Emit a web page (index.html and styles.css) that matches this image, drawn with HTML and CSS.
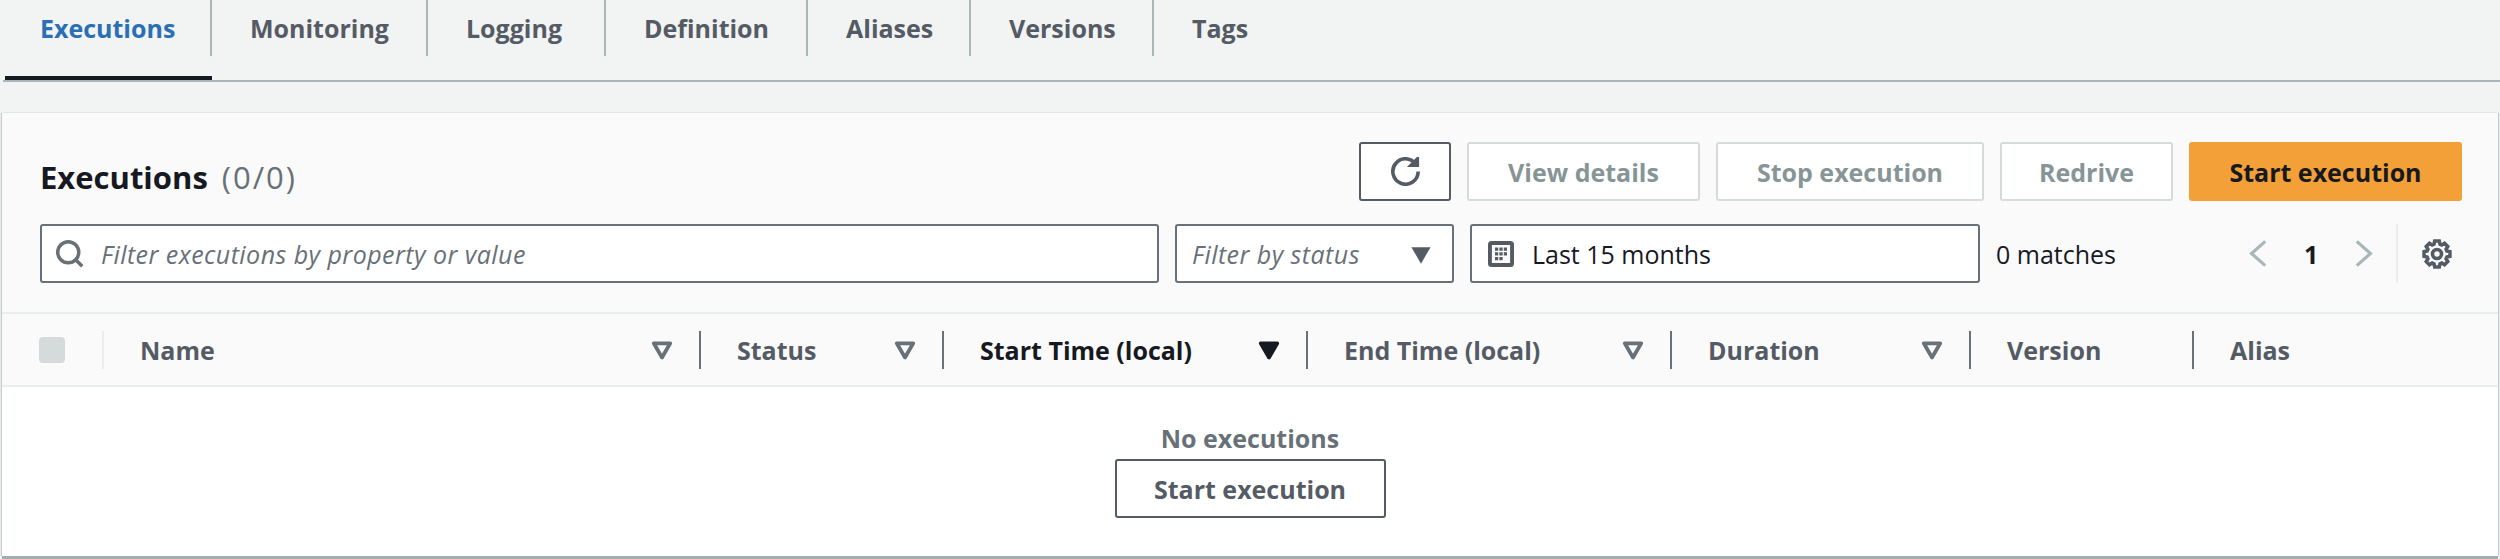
FILE: index.html
```html
<!DOCTYPE html>
<html lang="en">
<head>
    <meta charset="UTF-8">
    <title>Executions</title>
    <link rel="stylesheet" href="styles.css">
</head>
<body>
    <div class="tabs">
        <a class="tab tab-active">Executions</a>
        <a class="tab">Monitoring</a>
        <a class="tab">Logging</a>
        <a class="tab">Definition</a>
        <a class="tab">Aliases</a>
        <a class="tab">Versions</a>
        <a class="tab tab-last">Tags</a>
    </div>

    <div class="panel">
        <div class="panel-header">
            <div class="toolbar">
                <h2 class="title">Executions <span class="count">(0/0)</span></h2>
                <div class="actions">
                    <button class="btn btn-refresh">
                        <svg class="icon-refresh" viewBox="0 0 16 16"><path class="arrow-head" d="M10 5h5V0z"/><path d="M15 8a6.99 6.99 0 1 1-.64-2.94"/></svg>
                    </button>
                    <button class="btn btn-disabled btn-view">View details</button>
                    <button class="btn btn-disabled btn-stop">Stop execution</button>
                    <button class="btn btn-disabled btn-redrive">Redrive</button>
                    <button class="btn btn-primary">Start execution</button>
                </div>
            </div>
            <div class="filters">
                <div class="field field-search">
                    <svg class="icon-search" viewBox="0 0 16 16"><circle cx="7" cy="7" r="6"/><path d="M11.24 11.24 15 15"/></svg>
                    <span class="placeholder">Filter executions by property or value</span>
                </div>
                <div class="field field-status">
                    <span class="placeholder">Filter by status</span>
                    <svg class="caret" viewBox="0 0 16 16"><path d="M1 3h14l-7 12z"/></svg>
                </div>
                <div class="field field-date">
                    <svg class="icon-calendar" viewBox="0 0 16 16">
                        <rect class="cal-frame" x="1.2" y="1.2" width="13.6" height="13.6" rx="1"/>
                        <path d="M4.3 4h2v2h-2zM7 4h2v2H7zM9.700 4h2v2h-2zM4.300 6.900h2v2h-2zM7 6.900h2v2H7zM9.700 6.900h2v2h-2zM4.300 9.800h2v2h-2zM7 9.800h2v2H7z"/>
                    </svg>
                    <span>Last 15 months</span>
                </div>
                <span class="matches">0 matches</span>
                <div class="pager">
                    <svg class="chevron" viewBox="0 0 11 18"><path d="M10 1.500 1.500 9l8.500 7.500"/></svg>
                    <span class="page-num">1</span>
                    <svg class="chevron" viewBox="0 0 11 18"><path d="M1 1.500 9.500 9 1 16.500"/></svg>
                </div>
                <div class="settings">
                    <svg class="icon-gear" viewBox="0 0 16 16">
                        <path d="M9.216 1.106 9.608 2.740 10.582 3.144 12.015 2.266 13.734 3.985 12.856 5.418 13.260 6.392 14.894 6.784V9.216L13.260 9.608 12.856 10.582 13.734 12.015 12.015 13.734 10.582 12.856 9.608 13.260 9.216 14.894H6.784L6.392 13.260 5.418 12.856 3.985 13.734 2.266 12.015 3.144 10.582 2.740 9.608 1.106 9.216V6.784L2.740 6.392 3.144 5.418 2.266 3.985 3.985 2.266 5.418 3.144 6.392 2.740 6.784 1.106z"/>
                        <circle cx="8" cy="8" r="2.4"/>
                    </svg>
                </div>
            </div>
        </div>

        <div class="thead">
            <div class="th th-check"><span class="checkbox"></span></div>
            <div class="th">Name <svg class="sort" viewBox="0 0 16 16"><path d="M2.500 3.500h11L8 13z"/></svg></div>
            <div class="th">Status <svg class="sort" viewBox="0 0 16 16"><path d="M2.500 3.500h11L8 13z"/></svg></div>
            <div class="th th-sorted">Start Time (local) <svg class="sort" viewBox="0 0 16 16"><path d="M2.500 3.500h11L8 13z"/></svg></div>
            <div class="th">End Time (local) <svg class="sort" viewBox="0 0 16 16"><path d="M2.500 3.500h11L8 13z"/></svg></div>
            <div class="th">Duration <svg class="sort" viewBox="0 0 16 16"><path d="M2.500 3.500h11L8 13z"/></svg></div>
            <div class="th">Version</div>
            <div class="th">Alias</div>
        </div>

        <div class="empty">
            <div class="empty-text">No executions</div>
            <button class="btn btn-normal">Start execution</button>
        </div>
    </div>
</body>
</html>
```

FILE: styles.css
```css
* {
    box-sizing: border-box;
}
body {
    margin: 0;
    height: 559px;
    overflow: hidden;
    background: #f2f3f3;
    font-family: "Open Sans", "Noto Sans", sans-serif;
    font-size: 25px;
    color: #16191f;
}
svg {
    display: block;
    flex: none;
}

/* tabs */
.tabs {
    display: grid;
    grid-template-columns: 207px 216px 178px 202px 163px 183px auto;
    height: 82px;
    margin-left: 3px;
    padding-left: 2px;
    border-bottom: 2px solid #aab7b8;
}
.tab {
    height: 80px;
    padding-left: 38px;
    font-weight: 700;
    color: #545b64;
    line-height: 56px;
    position: relative;
}
.tab::after {
    content: "";
    position: absolute;
    top: 0;
    right: 0;
    width: 2px;
    height: 56px;
    background: #aab7b8;
}
.tab-last::after {
    display: none;
}
.tab-active {
    padding-left: 35px;
    color: #2a6fb5;
    border-bottom: 4px solid #16191f;
}

/* panel */
.panel {
    height: 443px;
    margin: 31px 2px 0 2px;
    background: #fff;
    box-shadow: 0 3px 0 #a4adae, -1px 0 1px #c3cbcb, 1px 0 1px #c3cbcb;
}
.panel-header {
    height: 201px;
    padding: 29px 36px 0 38px;
    background: #fafafa;
    border-bottom: 2px solid #eaeded;
}
.toolbar {
    display: flex;
    justify-content: space-between;
    align-items: center;
}
.title {
    margin: 0;
    padding-top: 10px;
    font-size: 31px;
    font-weight: 700;
}
.count {
    margin-left: 6px;
    font-weight: 400;
    letter-spacing: 2px;
    color: #687078;
}
.actions {
    display: flex;
    gap: 16px;
}
.btn {
    height: 59px;
    padding: 0;
    border: 2px solid #545b64;
    border-radius: 3px;
    background: #fff;
    font-family: inherit;
    font-size: 25px;
    font-weight: 700;
}
.btn-refresh {
    display: flex;
    align-items: center;
    justify-content: center;
    width: 92px;
}
.icon-refresh {
    width: 29px;
    height: 29px;
    fill: none;
    stroke: #545b64;
    stroke-width: 2;
}
.arrow-head {
    fill: #545b64;
    stroke-width: 1;
}
.btn-disabled {
    border-color: #d5dbdb;
    color: #879596;
}
.btn-view {
    width: 233px;
}
.btn-stop {
    width: 268px;
}
.btn-redrive {
    width: 173px;
}
.btn-primary {
    width: 273px;
    border-color: #f2a037;
    background: #f2a037;
    color: #16191f;
}
.btn-normal {
    width: 271px;
    color: #545b64;
}

/* filters */
.filters {
    display: flex;
    align-items: center;
    gap: 16px;
    margin-top: 23px;
}
.field {
    display: flex;
    flex: none;
    align-items: center;
    height: 59px;
    border: 2px solid #687078;
    border-radius: 3px;
    background: #fff;
}
.field-search {
    width: 1119px;
    padding-left: 14px;
    gap: 17px;
}
.field-status {
    width: 279px;
    padding: 0 20px 0 15px;
    justify-content: space-between;
}
.field-date {
    width: 510px;
    padding-left: 16px;
    gap: 18px;
}
.placeholder {
    font-style: italic;
    letter-spacing: 0.45px;
    color: #687078;
}
.icon-search {
    width: 28px;
    height: 28px;
    fill: none;
    stroke: #687078;
    stroke-width: 2;
}
.caret {
    width: 22px;
    height: 22px;
    fill: #545b64;
}
.icon-calendar {
    width: 26px;
    height: 26px;
    fill: #545b64;
}
.cal-frame {
    fill: #fff;
    stroke: #545b64;
    stroke-width: 2.4;
}
.matches {
    flex: none;
    width: 237px;
}
.pager {
    display: flex;
    align-items: center;
    gap: 37px;
}
.chevron {
    width: 18px;
    height: 29px;
    fill: none;
    stroke: #aab7b8;
    stroke-width: 2;
}
.page-num {
    font-weight: 700;
}
.settings {
    height: 59px;
    margin-left: 7px;
    padding-left: 24px;
    border-left: 2px solid #eaeded;
    display: flex;
    align-items: center;
}
.icon-gear {
    width: 30px;
    height: 30px;
    fill: none;
    stroke: #545b64;
    stroke-width: 1.9;
}

/* table head */
.thead {
    display: grid;
    grid-template-columns: 100px 597px 243px 364px 364px 299px 223px 1fr;
    align-items: center;
    height: 73px;
    background: #fafafa;
    border-bottom: 2px solid #eaeded;
}
.th {
    display: flex;
    align-items: center;
    justify-content: space-between;
    height: 38px;
    padding: 0 25px 0 36px;
    border-left: 2px solid #687078;
    font-weight: 700;
    color: #545b64;
    white-space: nowrap;
}
.th:nth-child(2) {
    border-left-color: #eaeded;
}
.th-check {
    padding: 0 0 0 37px;
    border-left: 0;
}
.checkbox {
    width: 26px;
    height: 26px;
    border-radius: 4px;
    background: #d5dbdb;
}
.sort {
    width: 24px;
    height: 24px;
    fill: none;
    stroke: #687078;
    stroke-width: 2.5;
    stroke-linejoin: round;
}
.th-sorted {
    color: #16191f;
}
.th-sorted .sort {
    fill: #16191f;
    stroke: #16191f;
}

/* empty state */
.empty {
    display: flex;
    flex-direction: column;
    align-items: center;
    padding-top: 33px;
}
.empty-text {
    line-height: 36px;
    margin-bottom: 3px;
    font-weight: 700;
    color: #687078;
}
```
